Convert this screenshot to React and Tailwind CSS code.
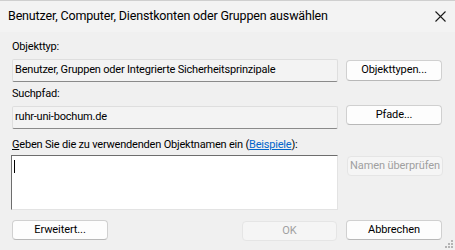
import React from "react";

const btn =
  "flex items-center justify-center whitespace-nowrap rounded-[4px] border border-[#d0d0d0] border-b-[#b8b8b8] bg-[#fdfdfd] text-[11px] tracking-[-0.1px] text-black";
const btnOff =
  "flex items-center justify-center whitespace-nowrap rounded-[4px] border border-[#e5e5e5] bg-[#f5f5f5] text-[11px] tracking-[-0.1px] text-[#a0a0a0]";
const field =
  "flex items-center h-[23px] w-[326px] pl-[2px] border border-[#dedede] border-b-[#8a8a8a] rounded-[2px] bg-[#f3f3f3] text-[11px] tracking-[-0.2px] text-black";
const label = "h-[16px] leading-[16px] text-[11px] tracking-[-0.2px] text-black";

function CloseIcon() {
  return (
    <svg width="11" height="11" viewBox="0 0 11 11">
      <path d="M0.5 0.5 L10.5 10.5 M10.5 0.5 L0.5 10.5" stroke="#1a1a1a" strokeWidth="1.1" />
    </svg>
  );
}

function Grip() {
  const dots = [
    [6, 0],
    [3, 3],
    [6, 3],
    [0, 6],
    [3, 6],
    [6, 6],
  ];
  return (
    <svg width="8" height="8" viewBox="0 0 8 8" className="absolute right-[2px] bottom-[2px]">
      {dots.map(([x, y], i) => (
        <rect key={i} x={x} y={y} width="2" height="2" fill="#b4b4b4" />
      ))}
    </svg>
  );
}

export default function App() {
  return (
    <div
      className="relative w-[455px] h-[250px] bg-[#f0f0f0] flex flex-col overflow-hidden"
      style={{ fontFamily: 'Roboto, "Noto Sans", sans-serif' }}
    >
      {/* title bar */}
      <div className="h-[32px] bg-[#f3f3f3] flex items-center justify-between pl-[8px] pr-[9px] border-t border-[#cfcfcf]">
        <span className="text-[12.5px] tracking-[-0.16px] text-black">
          Benutzer, Computer, Dienstkonten oder Gruppen auswählen
        </span>
        <CloseIcon />
      </div>

      <div className="flex flex-col px-[12px]">
        <div className={label + " mt-[7px]"}>Objekttyp:</div>
        <div className="flex items-start mt-[4px]">
          <div className={field}>Benutzer, Gruppen oder Integrierte Sicherheitsprinzipale</div>
          <button className={btn + " w-[96px] h-[21px] ml-[8px] mt-[1px]"}>Objekttypen...</button>
        </div>

        <div className={label + " mt-[4px]"}>Suchpfad:</div>
        <div className="flex items-start mt-[4px]">
          <div className={field}>ruhr-uni-bochum.de</div>
          <button className={btn + " w-[96px] h-[20px] ml-[8px] -mt-[1px]"}>Pfade...</button>
        </div>

        <div className={label + " mt-[8px]"}>
          <span className="underline">G</span>eben Sie die zu verwendenden Objektnamen ein (
          <span className="text-[#0066cc] underline">Beispiele</span>):
        </div>
        <div className="flex items-start mt-[2px] -ml-[1px]">
          <div className="w-[327px] h-[55px] bg-white border border-[#6d6d6d] border-b-[#e3e3e3] border-r-[#e3e3e3] pl-[2px] pt-[4px]">
            <div className="w-[1px] h-[13px] bg-black" />
          </div>
          <button className={btnOff + " w-[96px] h-[20px] ml-[9px] mt-[1px]"}>Namen überprüfen</button>
        </div>

        <div className="flex items-start mt-[10px]">
          <button className={btn + " w-[96px] h-[20px]"}>Erweitert...</button>
          <button className={btnOff + " w-[95px] h-[20px] ml-[134px] mt-[1px]"}>OK</button>
          <button className={btn + " w-[96px] h-[20px] ml-[9px] border-[#b0b0b0] border-b-[#8a8a8a]"}>Abbrechen</button>
        </div>
      </div>
      <Grip />
    </div>
  );
}
